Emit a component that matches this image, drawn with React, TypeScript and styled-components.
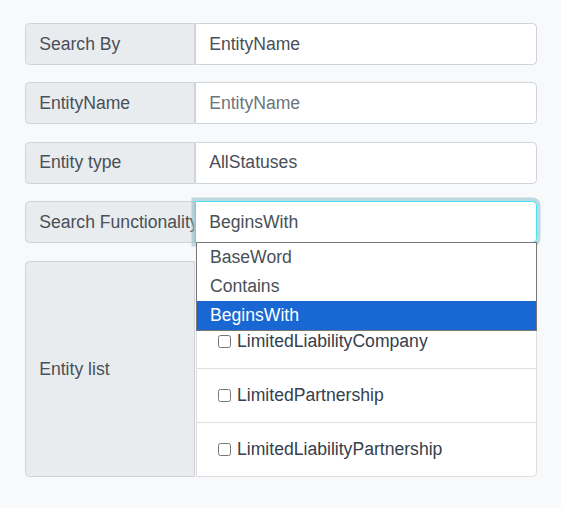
import React from "react";
import styled, { createGlobalStyle } from "styled-components";

const GlobalStyle = createGlobalStyle`
  html, body {
    margin: 0;
    background: #f8f9fa;
    font-family: "Liberation Sans", Arial, sans-serif;
  }
`;

const Page = styled.div`
  padding: 23px 24px 0 25px;
  width: 512px;
`;

const FormRow = styled.div`
  display: flex;
  align-items: stretch;
  margin-bottom: 17.6px;
  position: relative;
`;

const Prepend = styled.div`
  box-sizing: border-box;
  width: 170px;
  flex: none;
  display: flex;
  align-items: center;
  padding: 6.6px 13.2px;
  font-size: 17.6px;
  line-height: 26.4px;
  color: #495057;
  background: #e9ecef;
  border: 1px solid #ced4da;
  border-radius: 4.4px 0 0 4.4px;
  white-space: nowrap;
  overflow: hidden;
`;

const Field = styled.div<{ $placeholder?: boolean; $focused?: boolean }>`
  box-sizing: border-box;
  flex: 1;
  height: 41.8px;
  padding: 6.6px 13.2px;
  font-size: 17.6px;
  line-height: 26.4px;
  color: ${(p) => (p.$placeholder ? "#6c757d" : "#495057")};
  background: #fff;
  border: 1px solid ${(p) => (p.$focused ? "#3fe6ef" : "#ced4da")};
  border-radius: 0 4.4px 4.4px 0;
  position: relative;
  z-index: 1;
  box-shadow: ${(p) =>
    p.$focused ? "0 0 0 3.5px rgba(130, 185, 195, 0.5)" : "none"};
`;

const Dropdown = styled.div`
  position: absolute;
  top: 40px;
  left: 0;
  right: -1px;
  z-index: 5;
  background: #fff;
  border: 1px solid #767676;
`;

const Option = styled.div<{ $selected?: boolean }>`
  padding: 0 13px;
  height: 29px;
  line-height: 29px;
  font-size: 17.6px;
  color: ${(p) => (p.$selected ? "#fff" : "#495057")};
  background: ${(p) => (p.$selected ? "#1967d2" : "#fff")};
`;

const ListRow = styled(FormRow)`
  margin-bottom: 0;
`;

const ListLabel = styled(Prepend)`
  align-items: center;
`;

const ListGroup = styled.div`
  flex: 1;
  margin-left: 1px;
  background: #fff;
  border: 1px solid #dfdfdf;
  border-radius: 0 4.4px 4.4px 0;
`;

const ListItem = styled.label`
  display: flex;
  align-items: center;
  height: 53.9px;
  box-sizing: border-box;
  padding: 0 21px;
  font-size: 17.6px;
  color: #34404d;
  border-bottom: 1px solid #dfdfdf;
  &:last-child {
    border-bottom: none;
    height: 52.8px;
  }
`;

const Check = styled.input`
  width: 13px;
  height: 13px;
  margin: 0 6px 0 0;
`;

const entityTypes = [
  "Corporation",
  "LimitedLiabilityCompany",
  "LimitedPartnership",
  "LimitedLiabilityPartnership",
];

const App = () => {
  return (
    <Page>
      <GlobalStyle />
      <FormRow>
        <Prepend>Search By</Prepend>
        <Field>EntityName</Field>
      </FormRow>
      <FormRow>
        <Prepend>EntityName</Prepend>
        <Field $placeholder>EntityName</Field>
      </FormRow>
      <FormRow>
        <Prepend>Entity type</Prepend>
        <Field>AllStatuses</Field>
      </FormRow>
      <FormRow>
        <Prepend>Search Functionality</Prepend>
        <Field $focused>
          BeginsWith
          <Dropdown>
            <Option>BaseWord</Option>
            <Option>Contains</Option>
            <Option $selected>BeginsWith</Option>
          </Dropdown>
        </Field>
      </FormRow>
      <ListRow>
        <ListLabel>Entity list</ListLabel>
        <ListGroup>
          {entityTypes.map((name) => (
            <ListItem key={name}>
              <Check type="checkbox" />
              {name}
            </ListItem>
          ))}
        </ListGroup>
      </ListRow>
    </Page>
  );
};

export default App;
